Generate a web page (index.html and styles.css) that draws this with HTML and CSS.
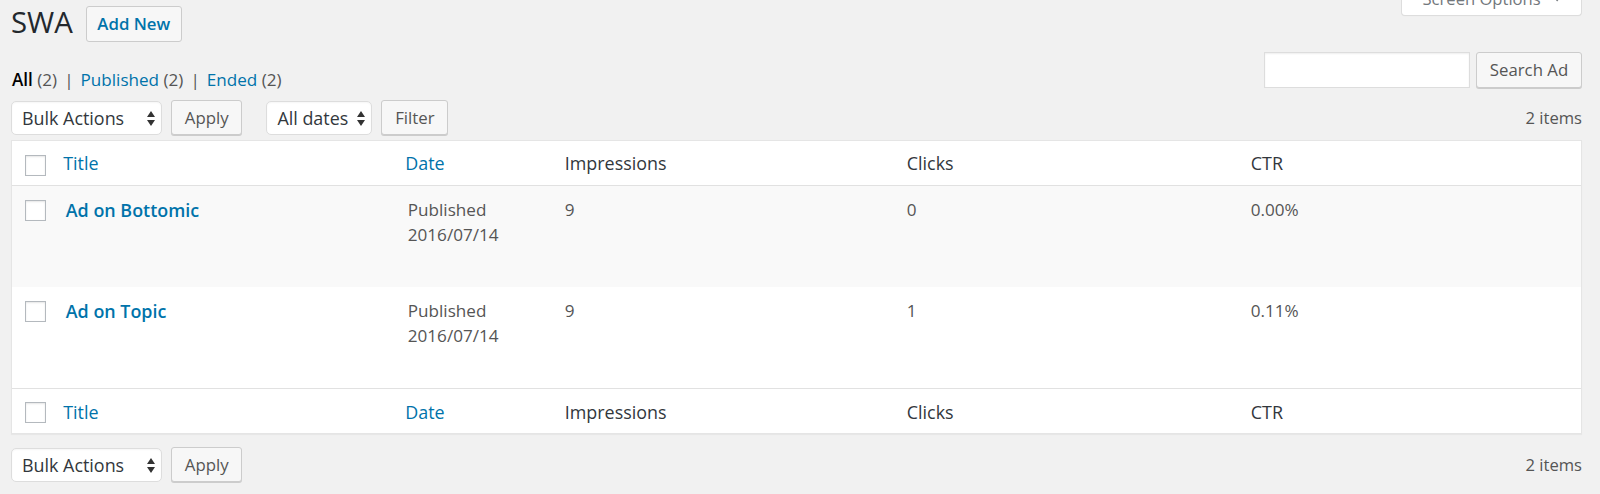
FILE: index.html
```html
<!DOCTYPE html>
<html lang="en">
<head>
<meta charset="utf-8">
<title>SWA</title>
<link rel="stylesheet" href="styles.css">
</head>
<body>
<div class="wrap">
  <div class="page-head">
    <h1 class="page-title">SWA</h1>
    <a class="title-action" href="#">Add New</a>
    <div class="screen-tab">
      <span>Screen Options</span>
      <svg class="tab-arrow" width="10" height="6" viewBox="0 0 10 6"><path d="M0 0 H10 L5 6 Z" fill="#72777c"/></svg>
    </div>
  </div>

  <div class="filter-row">
    <ul class="views">
      <li><a class="current" href="#">All <span class="count">(2)</span></a><span class="sep">|</span></li>
      <li><a href="#">Published <span class="count">(2)</span></a><span class="sep">|</span></li>
      <li><a href="#">Ended <span class="count">(2)</span></a></li>
    </ul>
    <div class="search-box">
      <input class="search-input" type="search" aria-label="Search Ad">
      <button class="button" type="button">Search Ad</button>
    </div>
  </div>

  <div class="tablenav">
    <div class="select select-bulk"><span>Bulk Actions</span>
      <svg class="updown" width="8" height="15" viewBox="0 0 8 15"><path d="M4 0 L8 6 H0 Z M0 9 H8 L4 15 Z" fill="#333"/></svg>
    </div>
    <button class="button btn-apply" type="button">Apply</button>
    <div class="select select-dates"><span>All dates</span>
      <svg class="updown" width="8" height="15" viewBox="0 0 8 15"><path d="M4 0 L8 6 H0 Z M0 9 H8 L4 15 Z" fill="#333"/></svg>
    </div>
    <button class="button" type="button">Filter</button>
    <span class="num">2 items</span>
  </div>

  <table class="list">
    <colgroup>
      <col class="c-cb">
      <col class="c-title">
      <col class="c-date">
      <col class="c-imp">
      <col class="c-clicks">
      <col>
    </colgroup>
    <thead>
      <tr>
        <th class="check-column"><span class="cb"></span></th>
        <th class="sortable"><a href="#">Title</a></th>
        <th class="sortable"><a href="#">Date</a></th>
        <th>Impressions</th>
        <th>Clicks</th>
        <th>CTR</th>
      </tr>
    </thead>
    <tbody>
      <tr class="data-row alt">
        <td class="check-column"><span class="cb"></span></td>
        <td><a class="row-title" href="#">Ad on Bottomic</a></td>
        <td>Published<br>2016/07/14</td>
        <td>9</td>
        <td>0</td>
        <td>0.00%</td>
      </tr>
      <tr class="data-row">
        <td class="check-column"><span class="cb"></span></td>
        <td><a class="row-title" href="#">Ad on Topic</a></td>
        <td>Published<br>2016/07/14</td>
        <td>9</td>
        <td>1</td>
        <td>0.11%</td>
      </tr>
    </tbody>
    <tfoot>
      <tr>
        <th class="check-column"><span class="cb"></span></th>
        <th class="sortable"><a href="#">Title</a></th>
        <th class="sortable"><a href="#">Date</a></th>
        <th>Impressions</th>
        <th>Clicks</th>
        <th>CTR</th>
      </tr>
    </tfoot>
  </table>

  <div class="tablenav tablenav-bottom">
    <div class="select select-bulk"><span>Bulk Actions</span>
      <svg class="updown" width="8" height="15" viewBox="0 0 8 15"><path d="M4 0 L8 6 H0 Z M0 9 H8 L4 15 Z" fill="#333"/></svg>
    </div>
    <button class="button btn-apply" type="button">Apply</button>
    <span class="num">2 items</span>
  </div>
</div>
</body>
</html>
```

FILE: styles.css
```css
* { box-sizing: border-box; }

html, body {
  margin: 0;
  background: #f1f1f1;
}

body {
  font-family: "Open Sans", "Liberation Sans", sans-serif;
  font-size: 16.6px;
  line-height: 1.4;
  color: #444;
}

a { color: #0073aa; text-decoration: none; }

.wrap {
  padding: 0 18px 0 11px;
}

/* ---------- heading ---------- */
.page-head {
  display: flex;
  align-items: flex-start;
  height: 41px;
}

.page-title {
  margin: 0;
  padding-top: 4px;
  font-size: 29.4px;
  font-weight: 400;
  line-height: 37px;
  color: #23282d;
}

.title-action {
  margin: 6px 0 0 13px;
  height: 35.5px;
  padding: 5px 10.5px;
  border: 1px solid #ccc;
  border-radius: 3px;
  background: #f7f7f7;
  color: #0073aa;
  font-size: 16.8px;
  font-weight: 600;
  line-height: 23.5px;
}

.screen-tab {
  margin: -18px 0 0 auto;
  width: 181px;
  height: 34px;
  padding: 5px 20px 5px 20.5px;
  display: flex;
  align-items: center;
  gap: 12px;
  background: #fff;
  border: 1px solid #ddd;
  border-top: 0;
  border-radius: 0 0 4px 4px;
  box-shadow: 0 1px 1px -1px rgba(0, 0, 0, 0.1);
  color: #72777c;
  line-height: 23px;
  white-space: nowrap;
}

/* ---------- views + search ---------- */
.filter-row {
  margin-top: 11px;
  height: 40px;
  display: flex;
  justify-content: space-between;
}

.views {
  align-self: flex-end;
  margin: 0;
  padding: 0 0 0 1px;
  list-style: none;
  display: flex;
  font-size: 17.1px;
  line-height: 25px;
  color: #555;
}

.views .current { color: #000; font-weight: 600; }
.views .count { color: #555; font-weight: 400; }
.views .sep { margin: 0 7px; color: #555; }

.search-box {
  display: flex;
  align-items: flex-start;
}

.search-input {
  width: 206px;
  height: 36px;
  margin: 0 6px 0 0;
  padding: 0 8px;
  border: 1px solid #ddd;
  border-radius: 0;
  background: #fff;
  box-shadow: inset 0 1px 2px rgba(0, 0, 0, 0.07);
  font: inherit;
  outline: none;
}

.button {
  height: 35px;
  margin: 0;
  padding: 0 12.8px;
  border: 1px solid #ccc;
  border-radius: 3px;
  background: #f7f7f7;
  box-shadow: 0 1px 0 #ccc;
  color: #555;
  font-family: inherit;
  font-size: 16.8px;
  line-height: 33px;
  white-space: nowrap;
  cursor: pointer;
}

.search-box .button { height: 36px; line-height: 34px; }

/* ---------- tablenav ---------- */
.tablenav {
  margin-top: 8px;
  height: 36px;
  display: flex;
  align-items: flex-start;
}

.tablenav-bottom { margin-top: 13px; }

.select {
  margin-top: 1px;
  height: 34px;
  padding: 0 6px 0 10px;
  display: flex;
  align-items: center;
  justify-content: space-between;
  border: 1px solid #ddd;
  border-radius: 5px;
  background: #fff;
  box-shadow: inset 0 1px 2px rgba(0, 0, 0, 0.04);
  color: #32373c;
  font-size: 17.9px;
  line-height: 32px;
  white-space: nowrap;
}

.select-bulk { width: 151px; margin-right: 9px; }
.select-dates { width: 106px; margin-right: 9px; }
.btn-apply { margin-right: 24px; }

.updown { flex: none; }

.num {
  margin: 5px 0 0 auto;
  line-height: 26px;
  color: #555;
}

/* ---------- list table ---------- */
.list {
  width: 100%;
  margin-top: 4px;
  table-layout: fixed;
  border-collapse: separate;
  border-spacing: 0;
  border: 1px solid #e5e5e5;
  background: #fff;
  box-shadow: 0 1px 1px rgba(0, 0, 0, 0.04);
}

.c-cb { width: 41px; }
.c-title { width: 342px; }
.c-date { width: 157px; }
.c-imp { width: 342px; }
.c-clicks { width: 344px; }

.list th {
  padding: 10px 12.8px;
  text-align: left;
  font-weight: 400;
  font-size: 17.9px;
  line-height: 24px;
  color: #32373c;
  vertical-align: top;
}

.list thead th { border-bottom: 1px solid #e1e1e1; }
.list tfoot th { border-top: 1px solid #e1e1e1; }
.list tfoot th:not(.check-column) { padding-top: 11px; padding-bottom: 9px; }

.list th.sortable { padding-left: 10.24px; padding-right: 10.24px; }

.list td {
  padding: 12px 12.8px 8px;
  vertical-align: top;
  font-size: 17.1px;
  line-height: 24.5px;
  color: #555;
}

.data-row { height: 101px; }
.data-row.alt td { background: #f9f9f9; }

.list .check-column {
  padding: 14px 0 0 13px;
}

.list tfoot .check-column { padding-top: 13px; }

.cb {
  display: block;
  width: 21px;
  height: 21px;
  border: 1px solid #b4b9be;
  background: #fff;
  box-shadow: inset 0 1px 2px rgba(0, 0, 0, 0.1);
}

.row-title {
  font-size: 17.9px;
  font-weight: 600;
  color: #0073aa;
}
```
